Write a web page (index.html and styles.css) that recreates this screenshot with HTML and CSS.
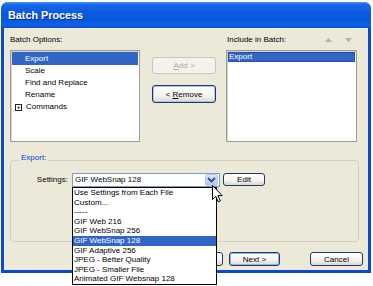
FILE: index.html
```html
<!DOCTYPE html>
<html>
<head>
<meta charset="utf-8">
<link rel="stylesheet" href="styles.css">
</head>
<body>
<div class="win">
  <div class="title">Batch Process</div>
  <div class="client">
    <div class="top">
      <div class="col-left">
        <div class="lbl">Batch Options:</div>
        <div class="list">
          <div class="item sel">Export</div>
          <div class="item">Scale</div>
          <div class="item">Find and Replace</div>
          <div class="item">Rename</div>
          <div class="item tree"><span class="plus">+</span>Commands</div>
        </div>
      </div>
      <div class="col-mid">
        <div class="btn disabled"><span><u>A</u>dd &gt;</span></div>
        <div class="btn focus"><span>&lt; <u>R</u>emove</span></div>
      </div>
      <div class="col-right">
        <div class="lbl lbl-row">
          <span>Include in Batch:</span>
          <span class="arrows">
            <svg width="7" height="4" viewBox="0 0 7 4"><path d="M3.5 0 L7 4 L0 4 Z" fill="#b4b2a8"/></svg>
            <svg width="7" height="4" viewBox="0 0 7 4"><path d="M0 0 L7 0 L3.5 4 Z" fill="#b4b2a8"/></svg>
          </span>
        </div>
        <div class="list">
          <div class="item sel2">Export</div>
        </div>
      </div>
    </div>
    <div class="group">
      <span class="legend">Export:</span>
      <div class="settings">
        <span class="slabel">Settings:</span>
        <div class="combo">
          <span class="ctext">GIF WebSnap 128</span>
          <span class="drop">
            <svg width="9" height="6" viewBox="0 0 9 6"><path d="M1 1 L4.5 4.5 L8 1" fill="none" stroke="#3b4c7a" stroke-width="1.8"/></svg>
          </span>
          <div class="popup">
            <div class="pitem">Use Settings from Each File</div>
            <div class="pitem">Custom...</div>
            <div class="pitem">-----</div>
            <div class="pitem">GIF Web 216</div>
            <div class="pitem">GIF WebSnap 256</div>
            <div class="pitem psel">GIF WebSnap 128</div>
            <div class="pitem">GIF Adaptive 256</div>
            <div class="pitem">JPEG - Better Quality</div>
            <div class="pitem">JPEG - Smaller File</div>
            <div class="pitem">Animated GIF Websnap 128</div>
          </div>
          <svg class="cursor" width="11" height="18" viewBox="0 0 11 18"><path d="M0.5 0.5 L0.5 14.5 L3.8 11.4 L6.2 16.8 L8.3 15.9 L5.9 10.6 L10.2 10.6 Z" fill="#fff" stroke="#000" stroke-width="1" stroke-linejoin="miter"/></svg>
        </div>
        <div class="btn edit"><span>Edit</span></div>
      </div>
    </div>
    <div class="bottom">
      <div class="btn back"><span>&lt; <u>B</u>ack</span></div>
      <div class="btn default"><span>Next &gt;</span></div>
      <div class="btn cancel"><span>Cancel</span></div>
    </div>
  </div>
</div>
</body>
</html>
```
FILE: styles.css
```css
html, body {
  margin: 0;
  padding: 0;
  background: #ffffff;
}
body {
  font-family: "Liberation Sans", Arial, sans-serif;
  font-size: 8px;
  color: #000;
  min-height: 286px;
  overflow: hidden;
}
.win {
  margin: 2px 0 0 1px;
  width: 370px;
  box-sizing: border-box;
  border: 3px solid #0b48d2;
  border-top: 0;
  border-radius: 7px 7px 0 0;
  background: #ece9d8;
}
.title {
  margin: 0 -3px;
  height: 26px;
  line-height: 26px;
  padding-left: 7px;
  border-radius: 7px 7px 0 0;
  background: linear-gradient(to bottom, #4a95f8 0%, #1a68ea 10%, #0b5ade 40%, #0a58da 70%, #0d63e8 88%, #0a4fd0 100%);
  color: #fff;
  font-weight: bold;
  font-size: 10.8px;
  text-shadow: 1px 1px 0 #0a2f90;
}
.client {
  padding: 6px 9px 4px 6px;
}
.top {
  display: flex;
}
.col-left { width: 130px; }
.col-mid {
  width: 64px;
  margin-left: 12px;
  padding-top: 23px;
  display: flex;
  flex-direction: column;
  gap: 11px;
}
.col-right { width: 131px; margin-left: 10px; }
.lbl {
  height: 12px;
  line-height: 12px;
  padding-bottom: 4px;
  white-space: nowrap;
}
.lbl-row {
  display: flex;
  justify-content: space-between;
  padding-left: 1px;
}
.arrows {
  display: flex;
  gap: 13px;
  align-items: center;
  padding-right: 5px;
}
.list {
  height: 92px;
  box-sizing: border-box;
  background: #fff;
  border: 1px solid #9c9c9c;
  box-shadow: inset 1px 1px 0 #d6d3c6;
  padding: 1px;
}
.item {
  height: 12px;
  line-height: 12px;
  padding-left: 13px;
  white-space: nowrap;
}
.item.sel {
  height: 13px;
  line-height: 13px;
  background: #3166c6;
  color: #fff;
}
.item.sel2 {
  height: 10px;
  line-height: 10px;
  padding-left: 1px;
  background: #3166c6;
  color: #fff;
  outline: 1px dotted #1c3c80;
  outline-offset: -1px;
}
.tree {
  display: flex;
  align-items: center;
  padding-left: 3px;
}
.plus {
  width: 5px;
  height: 5px;
  border: 1px solid #222;
  font-size: 6px;
  line-height: 5px;
  text-align: center;
  margin-right: 4px;
  font-weight: bold;
  overflow: hidden;
}
.btn {
  box-sizing: border-box;
  display: flex;
  align-items: center;
  justify-content: center;
  border: 1px solid #1e3a68;
  border-radius: 3px;
  background: linear-gradient(to bottom, #ffffff 0%, #f4f3ee 60%, #dcd8cc 100%);
  white-space: nowrap;
}
.btn.disabled {
  height: 17px;
  border-color: #c9c7ba;
  background: #f3f2ec;
  color: #aca899;
}
.btn.focus {
  height: 18px;
  box-shadow: inset 0 0 0 1px #a8c0ea;
}
.group {
  margin-top: 18px;
  height: 82px;
  box-sizing: border-box;
  border: 1px solid #d0d0bf;
  border-radius: 4px;
}
.legend {
  display: block;
  width: fit-content;
  margin: -7px 0 0 8px;
  padding: 0 2px;
  line-height: 8px;
  background: #ece9d8;
  color: #0046d5;
}
.settings {
  margin-top: 11px;
  display: flex;
  align-items: flex-start;
}
.slabel {
  width: 57px;
  text-align: right;
  line-height: 14px;
  margin-right: 4px;
}
.combo {
  position: relative;
  width: 148px;
  height: 14px;
  box-sizing: border-box;
  border: 1px solid #7f9db9;
  background: #fff;
  display: flex;
  align-items: center;
  justify-content: space-between;
}
.ctext {
  padding-left: 2px;
  line-height: 12px;
}
.drop {
  width: 13px;
  height: 12px;
  box-sizing: border-box;
  margin-right: 1px;
  border: 1px solid #b9cbf3;
  border-radius: 2px;
  background: linear-gradient(to bottom, #d6e2fc, #b4c7f5);
  display: flex;
  align-items: center;
  justify-content: center;
}
.popup {
  position: absolute;
  left: -1px;
  top: 13px;
  width: 145px;
  box-sizing: border-box;
  border: 1px solid #000;
  background: #fff;
  z-index: 5;
}
.pitem {
  height: 9.6px;
  line-height: 9.6px;
  padding-left: 1px;
  white-space: nowrap;
}
.pitem.psel {
  background: #3166c6;
  color: #fff;
}
.cursor {
  position: absolute;
  left: 139px;
  top: 11px;
  z-index: 6;
}
.btn.edit {
  margin-left: 3px;
  width: 42px;
  height: 13px;
}
.bottom {
  display: flex;
  justify-content: flex-end;
  margin: 10px -4px 0 0;
}
.bottom .btn {
  height: 14px;
}
.btn.back { width: 54px; }
.btn.default {
  width: 51px;
  margin-left: 6px;
  box-shadow: inset 0 0 0 1px #8fb0ee;
}
.btn.cancel {
  width: 53px;
  margin-left: 30px;
}
```
